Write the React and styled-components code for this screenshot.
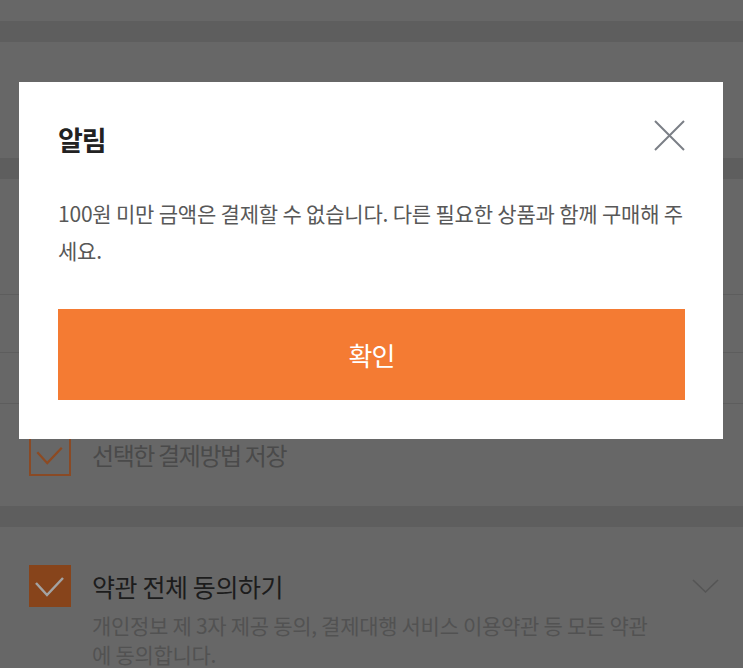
import React from "react";
import styled, { createGlobalStyle } from "styled-components";

const GlobalStyle = createGlobalStyle`
  html, body { margin: 0; padding: 0; background: #676767; }
  body { font-family: "Noto Sans CJK KR", "Noto Sans", sans-serif; }
  * { box-sizing: border-box; }
`;

const Page = styled.div`
  position: relative;
  width: 743px;
  height: 668px;
  overflow: hidden;
  background: #676767;
  display: flex;
  flex-direction: column;
`;

const Band = styled.div`
  height: ${(p) => p.$h}px;
  flex: none;
  background: #5e5e5e;
`;

const Block = styled.div`
  height: ${(p) => p.$h}px;
  flex: none;
  border-bottom: ${(p) => (p.$line ? "1px solid #5d5d5d" : "none")};
`;

const OptionRow = styled.div`
  flex: none;
  height: 102px;
  padding: 30px 0 0 29px;
  display: flex;
  gap: 21px;
  align-items: flex-start;
`;

const Box = styled.div`
  width: 42px;
  height: 42px;
  flex: none;
  border: ${(p) => (p.$filled ? "none" : "2px solid #8a4a25")};
  background: ${(p) => (p.$filled ? "#87441b" : "transparent")};
  display: flex;
  align-items: center;
  justify-content: center;
`;

const OptionLabel = styled.span`
  font-size: ${(p) => (p.$strong ? 25 : 24)}px;
  font-weight: 400;
  line-height: 42px;
  letter-spacing: ${(p) => (p.$strong ? -0.4 : -1.4)}px;
  color: ${(p) => p.$color};
`;

const AgreeSection = styled.div`
  flex: 1;
  padding: 38px 24px 0 29px;
  display: flex;
  gap: 21px;
`;

const AgreeText = styled.div`
  flex: 1;
  display: flex;
  flex-direction: column;
`;

const AgreeHead = styled.div`
  display: flex;
  align-items: center;
  justify-content: space-between;
  height: 42px;
`;

const AgreeSub = styled.p`
  margin: 4px 0 0;
  font-size: 21px;
  line-height: 29px;
  letter-spacing: -0.3px;
  color: #525252;
  white-space: nowrap;
`;

const Modal = styled.div`
  position: absolute;
  left: 19px;
  top: 82px;
  width: 704px;
  height: 357px;
  background: #ffffff;
  padding: 42px 38px 39px 39px;
  display: flex;
  flex-direction: column;
`;

const ModalHeader = styled.div`
  display: flex;
  justify-content: space-between;
  align-items: flex-start;
  height: 32px;
`;

const Title = styled.h2`
  margin: 0;
  font-size: 27px;
  line-height: 32px;
  font-weight: 700;
  letter-spacing: -1px;
  color: #222222;
`;

const CloseButton = styled.button`
  margin: -4px 0 0;
  padding: 0;
  width: 31px;
  height: 31px;
  border: none;
  background: none;
  display: flex;
`;

const Message = styled.p`
  margin: 39px -6px 0 0;
  font-size: 21px;
  line-height: 37px;
  letter-spacing: -0.2px;
  color: #585858;
`;

const ConfirmButton = styled.button`
  margin-top: auto;
  height: 91px;
  width: 627px;
  border: none;
  background: #f47b33;
  color: #ffffff;
  font-family: inherit;
  font-size: 26px;
  letter-spacing: -1px;
  display: flex;
  align-items: center;
  justify-content: center;
`;

const Check = ({ color, width = 2.5 }) => (
  <svg width="42" height="42" viewBox="0 0 42 42">
    <polyline
      points="7,18 18,30 34,13"
      fill="none"
      stroke={color}
      strokeWidth={width}
    />
  </svg>
);

export default function App() {
  return (
    <>
      <GlobalStyle />
      <Page>
        <Block $h={21} />
        <Band $h={21} />
        <Block $h={116} />
        <Band $h={21} />
        <Block $h={116} $line />
        <Block $h={58} $line />
        <Block $h={51} $line />
        <OptionRow>
          <Box>
            <Check color="#8d4a22" width={2.5} />
          </Box>
          <OptionLabel $color="#4a4a4a">선택한 결제방법 저장</OptionLabel>
        </OptionRow>
        <Band $h={21} />
        <AgreeSection>
          <Box $filled>
            <Check color="#a3a3a3" width={2.5} />
          </Box>
          <AgreeText>
            <AgreeHead>
              <OptionLabel $strong $color="#1c1c1c">약관 전체 동의하기</OptionLabel>
              <svg width="27" height="15" viewBox="0 0 27 15">
                <polyline
                  points="1,1 13.5,13 26,1"
                  fill="none"
                  stroke="#555555"
                  strokeWidth="1.6"
                />
              </svg>
            </AgreeHead>
            <AgreeSub>
              개인정보 제 3자 제공 동의, 결제대행 서비스 이용약관 등 모든 약관
              <br />에 동의합니다.
            </AgreeSub>
          </AgreeText>
        </AgreeSection>

        <Modal role="dialog">
          <ModalHeader>
            <Title>알림</Title>
            <CloseButton aria-label="닫기">
              <svg width="31" height="31" viewBox="0 0 31 31">
                <path
                  d="M1 1 L30 30 M30 1 L1 30"
                  stroke="#7b7f86"
                  strokeWidth="2"
                  fill="none"
                />
              </svg>
            </CloseButton>
          </ModalHeader>
          <Message>
            100원 미만 금액은 결제할 수 없습니다. 다른 필요한 상품과 함께 구매해 주세요.
          </Message>
          <ConfirmButton>확인</ConfirmButton>
        </Modal>
      </Page>
    </>
  );
}
